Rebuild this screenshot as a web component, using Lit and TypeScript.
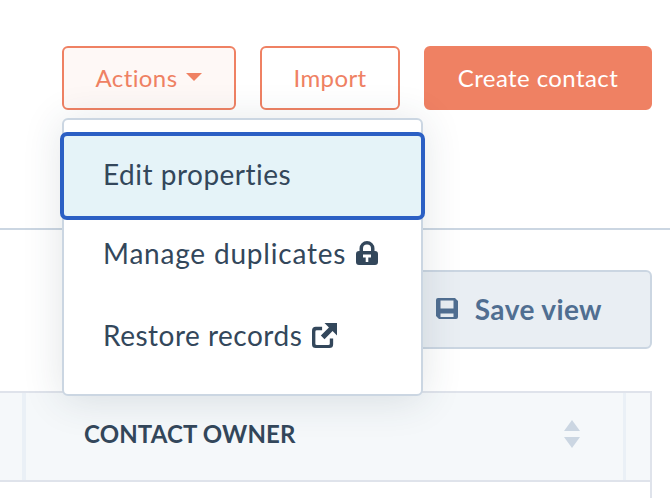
import { LitElement, html, css } from "lit";
import { customElement } from "lit/decorators.js";

@customElement("app-root")
export class AppRoot extends LitElement {
  static styles = css`
    :host { display: block; width: 670px; height: 498px; overflow: hidden; background: #fff; font-family: "Lato", "Liberation Sans", sans-serif; color: #33475b; }
    .head { box-sizing: border-box; height: 230px; border-bottom: 2px solid #cbd6e2; padding: 46px 18px 0 0; display: flex; justify-content: flex-end; align-items: flex-start; gap: 24px; }
    .btn { box-sizing: border-box; height: 64px; border-radius: 6px; border: 2px solid #ef8163; color: #ef8163; background: #fff; font-size: 24px; display: flex; align-items: center; justify-content: center; letter-spacing: 0.4px; padding-bottom: 2px; }
    .wrap { position: relative; }
    .actions { width: 174px; gap: 9px; background: #fef8f6; }
    .caret { width: 0; height: 0; border-left: 8px solid transparent; border-right: 8px solid transparent; border-top: 8px solid #ef8163; }
    .import { width: 140px; }
    .create { width: 228px; background: #ef8163; border-color: #ef8163; color: #fff; letter-spacing: 0.4px; }
    .menu { position: absolute; top: 72px; left: 0; box-sizing: border-box; width: 361px; height: 278px; background: #fff; border: 2px solid #cbd6e2; border-radius: 6px; box-shadow: 0 4px 40px rgba(45, 62, 80, 0.14); padding-top: 12px; z-index: 2; font-size: 28px; letter-spacing: 0.5px; }
    .item { box-sizing: border-box; height: 82px; display: flex; align-items: center; gap: 10px; padding: 0 0 4px 39px; }
    .item svg { fill: #33475b; flex: none; }
    .first { height: 88px; margin: 0 -4px -6px; padding-left: 39px; background: #e5f3f8; border: 4px solid #2b5fc4; border-radius: 7px; }
    .wide { letter-spacing: 0.8px; }
    .bar { box-sizing: border-box; height: 161px; padding: 40px 18px 0 0; display: flex; justify-content: flex-end; align-items: flex-start; }
    .save { box-sizing: border-box; width: 300px; height: 79px; background: #e9eef3; border: 2px solid #cbd6e2; border-radius: 6px; display: flex; align-items: center; justify-content: flex-end; gap: 17px; padding: 0 48px 2px 0; color: #506e91; font-size: 28px; font-weight: 700; letter-spacing: 0.4px; }
    .save svg { fill: #506e91; }
    .table { box-sizing: border-box; height: 107px; margin-right: 18px; border-right: 2px solid #dfe3eb; }
    .row { box-sizing: border-box; height: 91px; background: #f5f8fa; border-top: 2px solid #dfe3eb; border-bottom: 2px solid #dfe3eb; display: grid; grid-template-columns: 22px 1fr 24px; }
    .cell { display: flex; align-items: center; justify-content: space-between; padding: 0 43px 6px 58px; border-left: 4px solid #eaf0f6; border-right: 3px solid #eaf0f6; font-size: 24px; font-weight: 700; letter-spacing: 0.15px; }
    .sort { display: flex; flex-direction: column; gap: 6px; }
    .up, .down { width: 0; height: 0; border-left: 8px solid transparent; border-right: 8px solid transparent; }
    .up { border-bottom: 11px solid #cbd6e2; }
    .down { border-top: 11px solid #cbd6e2; }
  `;

  render() {
    return html`
      <div class="head">
        <div class="wrap">
          <div class="btn actions">Actions <span class="caret"></span></div>
          <div class="menu">
            <div class="item first">Edit properties</div>
            <div class="item wide">Manage duplicates
              <svg width="22" height="24" viewBox="0 0 22 24"><path fill-rule="evenodd" d="M3.5 10V7.5a7.5 7.5 0 0 1 15 0V10h.5a3 3 0 0 1 3 3v8a3 3 0 0 1-3 3H3a3 3 0 0 1-3-3v-8a3 3 0 0 1 3-3h.5zm3.5 0h8V7.5a4 4 0 0 0-8 0V10zm0 3.5v3h2.7V21h2.6v-4.5H15v-3H7z"/></svg>
            </div>
            <div class="item">Restore records
              <svg width="25" height="25" viewBox="0 0 26 26"><path d="M13 0h13v13l-4.6-4.6-8.4 8.4-3.8-3.8 8.4-8.4L13 0zM4 4h6.5v3.5H5a1.5 1.5 0 0 0-1.5 1.5v12.5A1.5 1.5 0 0 0 5 23h12a1.5 1.5 0 0 0 1.5-1.5V16H22v6a4 4 0 0 1-4 4H4a4 4 0 0 1-4-4V8a4 4 0 0 1 4-4z"/></svg>
            </div>
          </div>
        </div>
        <div class="btn import">Import</div>
        <div class="btn create">Create contact</div>
      </div>
      <div class="bar">
        <div class="save">
          <svg width="22" height="21" viewBox="0 0 22 21"><path fill-rule="evenodd" d="M2 0h17l3 3v16a2 2 0 0 1-2 2H3l-3-3V2a2 2 0 0 1 2-2zm2.5 2.5v8h13v-8h-13zm0 13v3.5h13v-3.5h-13z"/></svg>
          Save view
        </div>
      </div>
      <div class="table">
        <div class="row">
          <div></div>
          <div class="cell">CONTACT OWNER
            <div class="sort"><span class="up"></span><span class="down"></span></div>
          </div>
          <div></div>
        </div>
      </div>
    `;
  }
}
